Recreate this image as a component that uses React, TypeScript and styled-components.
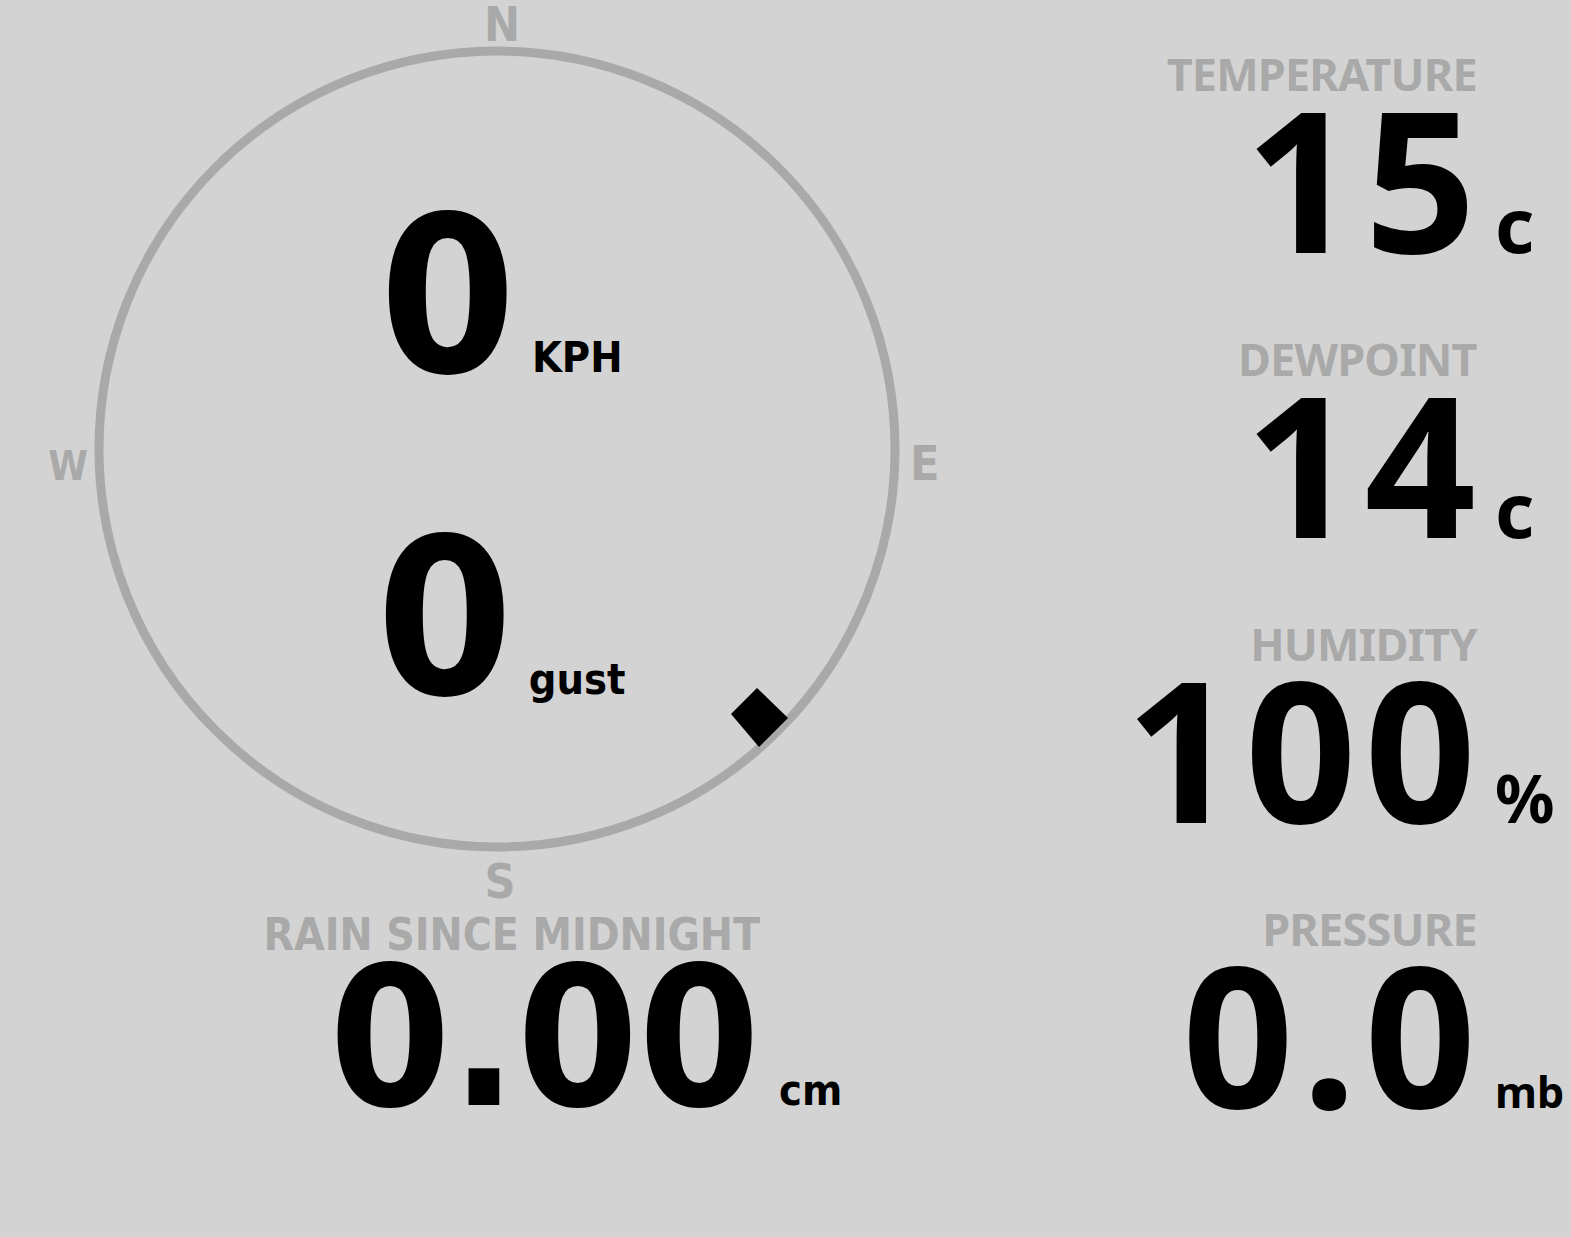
import styled, { createGlobalStyle } from 'styled-components';

const CONDENSED = `"DejaVu Sans Condensed", "Liberation Sans Narrow", "Roboto Condensed", "DejaVu Sans", sans-serif`;
const WIDE = `"Noto Sans", "Open Sans", "DejaVu Sans", sans-serif`;

const GlobalStyle = createGlobalStyle`
  html, body {
    margin: 0;
    padding: 0;
    background: #d3d3d3;
  }
  body {
    overflow: hidden;
  }
`;

interface ReadingProps {
  label: string;
  value: string;
  unit: string;
  condensed?: boolean;
  labelSize: number;
  valueSize: number;
  unitSize: number;
  unitCol: number;
  tracking?: number;
}

interface SpeedProps {
  value: string;
  unit: string;
}

const Page = styled.div`
  display: grid;
  grid-template-columns: 1000px 1fr;
  width: 1571px;
  height: 1237px;
  background: #d3d3d3;
  font-weight: 700;
`;

const LeftColumn = styled.div`
  display: flex;
  flex-direction: column;
`;

const RightColumn = styled.div`
  display: flex;
  flex-direction: column;
  gap: 77px;
  padding-top: 51px;
`;

// compass: W / dial / E with N above and S below
const Compass = styled.div`
  display: grid;
  grid-template-columns: 92px 810px 1fr;
  grid-template-rows: 44px 810px auto;
  font-family: ${CONDENSED};
  font-stretch: condensed;
  color: #a9a9a9;
`;

const Cardinal = styled.div<{ $pos: 'n' | 's' | 'w' | 'e' }>`
  font-size: ${(p) => (p.$pos === 'w' ? 40 : 48)}px;
  line-height: 1;
  ${(p) =>
    p.$pos === 'n' &&
    `grid-column: 2; grid-row: 1; justify-self: center; line-height: 40px; padding: 4px 0 0 10px;`}
  ${(p) =>
    p.$pos === 's' &&
    `grid-column: 2; grid-row: 3; justify-self: center; padding-top: 3px; padding-left: 6px;`}
  ${(p) =>
    p.$pos === 'w' &&
    `grid-column: 1; grid-row: 2; align-self: center; justify-self: end; padding: 34px 4px 0 0;`}
  ${(p) =>
    p.$pos === 'e' &&
    `grid-column: 3; grid-row: 2; align-self: center; justify-self: start; padding: 28px 0 0 8px;`}
`;

const Dial = styled.div`
  grid-column: 2;
  grid-row: 2;
  display: grid;
`;

const DialFace = styled.svg`
  grid-area: 1 / 1;
  width: 810px;
  height: 810px;
  display: block;
`;

const SpeedStack = styled.div`
  grid-area: 1 / 1;
  display: flex;
  flex-direction: column;
  align-items: center;
  gap: 104px;
  padding: 144px 0 0 8px;
`;

const SpeedRow = styled.div`
  display: flex;
  align-items: baseline;
  gap: 16px;
  color: #000;
`;

const SpeedValue = styled.span`
  font-size: 218px;
  line-height: 1;
`;

const SpeedUnit = styled.span`
  font-size: 43px;
  line-height: 1;
`;

const ReadingBlock = styled.div<{ $unitCol: number; $condensed?: boolean }>`
  display: grid;
  grid-template-columns: 1fr ${(p) => p.$unitCol}px;
  align-items: baseline;
  font-family: ${(p) => (p.$condensed ? CONDENSED : WIDE)};
  font-stretch: ${(p) => (p.$condensed ? 'condensed' : 'normal')};
`;

const ReadingLabel = styled.div<{ $size: number; $tracking: number }>`
  grid-column: 1;
  grid-row: 1;
  justify-self: end;
  color: #a9a9a9;
  font-size: ${(p) => p.$size}px;
  letter-spacing: ${(p) => (p.$tracking ? -0.8 : 0)}px;
  margin-right: ${(p) => (p.$tracking ? -0.8 : 0)}px;
  line-height: 1;
  white-space: nowrap;
`;

const ReadingValue = styled.div<{ $size: number; $tracking: number }>`
  grid-column: 1;
  grid-row: 2;
  justify-self: end;
  color: #000;
  font-size: ${(p) => p.$size}px;
  letter-spacing: ${(p) => p.$tracking}px;
  margin-right: ${(p) => -p.$tracking}px;
  line-height: 0.836;
  white-space: nowrap;
`;

const ReadingUnit = styled.div<{ $size: number }>`
  grid-column: 2;
  grid-row: 2;
  color: #000;
  font-size: ${(p) => p.$size}px;
  line-height: 0.8;
  padding-left: 19px;
`;

const RainSlot = styled.div`
  margin-top: 8px;
`;

const Speed = ({ value, unit }: SpeedProps) => (
  <SpeedRow>
    <SpeedValue>{value}</SpeedValue>
    <SpeedUnit>{unit}</SpeedUnit>
  </SpeedRow>
);

const Reading = ({
  label,
  value,
  unit,
  condensed,
  labelSize,
  valueSize,
  unitSize,
  unitCol,
  tracking = 0,
}: ReadingProps) => (
  <ReadingBlock $unitCol={unitCol} $condensed={condensed}>
    <ReadingLabel $size={labelSize} $tracking={tracking}>
      {label}
    </ReadingLabel>
    <ReadingValue $size={valueSize} $tracking={tracking}>
      {value}
    </ReadingValue>
    <ReadingUnit $size={unitSize}>{unit}</ReadingUnit>
  </ReadingBlock>
);

const App = () => {
  return (
    <>
      <GlobalStyle />
      <Page>
        <LeftColumn>
          <Compass>
            <Cardinal $pos="n">N</Cardinal>
            <Cardinal $pos="w">W</Cardinal>
            <Dial>
              <DialFace viewBox="0 0 810 810">
                <circle
                  cx="405"
                  cy="405"
                  r="398"
                  fill="none"
                  stroke="#a9a9a9"
                  strokeWidth="9"
                />
                {/* wind direction marker */}
                <polygon points="665,644 696,674 667,703 639,670" fill="#000" />
              </DialFace>
              <SpeedStack>
                <Speed value="0" unit="KPH" />
                <Speed value="0" unit="gust" />
              </SpeedStack>
            </Dial>
            <Cardinal $pos="e">E</Cardinal>
            <Cardinal $pos="s">S</Cardinal>
          </Compass>
          <RainSlot>
            <Reading
              condensed
              label="RAIN SINCE MIDNIGHT"
              value="0.00"
              unit="cm"
              labelSize={44}
              valueSize={194}
              unitSize={43}
              unitCol={240}
            />
          </RainSlot>
        </LeftColumn>
        <RightColumn>
          <Reading label="TEMPERATURE" value="15" unit="c" labelSize={45} valueSize={195} unitSize={76} unitCol={95} tracking={8} />
          <Reading label="DEWPOINT" value="14" unit="c" labelSize={45} valueSize={195} unitSize={76} unitCol={95} tracking={8} />
          <Reading label="HUMIDITY" value="100" unit="%" labelSize={45} valueSize={195} unitSize={66} unitCol={95} tracking={8} />
          <Reading label="PRESSURE" value="0.0" unit="mb" labelSize={45} valueSize={195} unitSize={43} unitCol={95} tracking={8} />
        </RightColumn>
      </Page>
    </>
  );
};

export default App;
